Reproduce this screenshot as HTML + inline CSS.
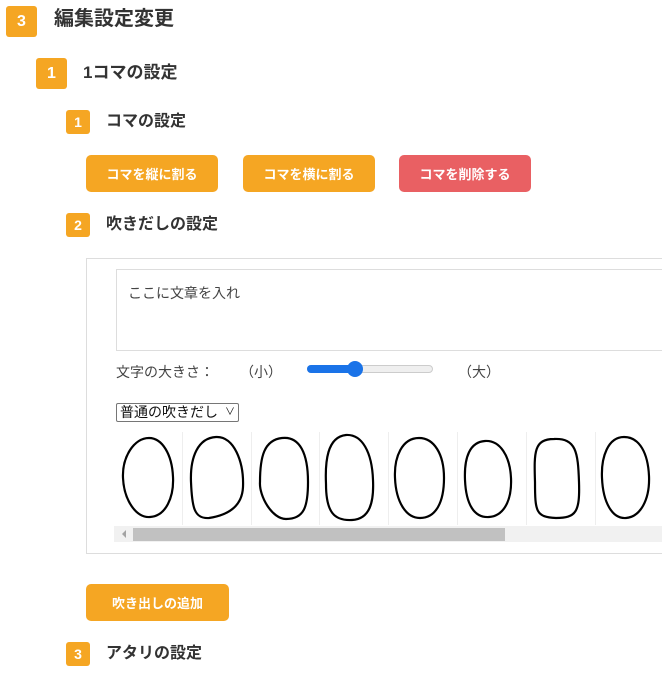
<!DOCTYPE html>
<html><head><meta charset="utf-8"><style>
*{margin:0;padding:0;box-sizing:border-box}
body{width:662px;height:682px;overflow:hidden;background:#fff;font-family:"Liberation Sans","Noto Sans CJK JP",sans-serif;color:#333;position:relative}
.a{position:absolute}
.b{position:absolute;background:#f5a623;color:#fff;border-radius:3px;display:flex;align-items:center;justify-content:center;font-weight:bold}
.t{position:absolute;font-weight:bold;color:#333;white-space:nowrap}
.btn{position:absolute;height:37px;border-radius:5px;background:#f5a623;color:#fff;font-weight:bold;font-size:13px;display:flex;align-items:center;justify-content:center}
</style></head><body>
<div class="b" style="left:6px;top:6px;width:31px;height:31px;font-size:16px">3</div>
<div class="t" style="left:54px;top:6px;font-size:20px;line-height:26px">編集設定変更</div>
<div class="b" style="left:36px;top:58px;width:31px;height:31px;font-size:16px">1</div>
<div class="t" style="left:83px;top:61px;font-size:17px;line-height:24px">1コマの設定</div>
<div class="b" style="left:66px;top:110px;width:24px;height:24px;font-size:14px">1</div>
<div class="t" style="left:106px;top:112px;font-size:16px;line-height:20px">コマの設定</div>
<div class="btn" style="left:86px;top:155px;width:132px">コマを縦に割る</div>
<div class="btn" style="left:243px;top:155px;width:132px">コマを横に割る</div>
<div class="btn" style="left:399px;top:155px;width:132px;background:#e96063">コマを削除する</div>
<div class="b" style="left:66px;top:213px;width:24px;height:24px;font-size:14px">2</div>
<div class="t" style="left:106px;top:215px;font-size:16px;line-height:20px">吹きだしの設定</div>
<div class="a" style="left:86px;top:258px;width:600px;height:296px;border:1px solid #ddd"></div>
<div class="a" style="left:116px;top:269px;width:560px;height:82px;border:1px solid #ddd;padding:13px 11px;font-size:14px;color:#444">ここに文章を入れ</div>
<div class="a" style="left:116px;top:362px;font-size:14px;color:#444">文字の大きさ：</div>
<div class="a" style="left:240px;top:362px;font-size:14px;color:#444">（小）</div>
<div class="a" style="left:458px;top:362px;font-size:14px;color:#444">（大）</div>
<div class="a" style="left:307px;top:365px;width:126px;height:8px;border-radius:4px;background:#efefef;border:1px solid #ccc"></div>
<div class="a" style="left:307px;top:365px;width:50px;height:8px;border-radius:4px;background:#1a73e8"></div>
<div class="a" style="left:347px;top:361px;width:16px;height:16px;border-radius:50%;background:#1a73e8"></div>
<div class="a" style="left:116px;top:403px;width:123px;height:19px;border:1px solid #767676;border-radius:2px;font-size:14px;line-height:17px;padding-left:3px;color:#111;white-space:nowrap">普通の吹きだし<span style="position:absolute;right:3px;top:0;font-size:10px">&#x2228;</span></div>
<div class="a" style="left:114px;top:432px;width:560px;height:110px;overflow:hidden">
<svg width="560" height="94" style="position:absolute;left:0;top:0" fill="none" stroke="#000" stroke-width="2.2">
<path d="M35 6 C20 6 8 25 9 46 C10 68 22 86 36 85 C52 84 60 65 59 45 C58 22 48 6 35 6Z"/>
<path d="M102 5 C84 6 76 25 77 50 C78 75 80 87 95 86 C108 84 128 78 129 55 C130 30 120 4 102 5Z"/>
<path d="M168 6 C150 8 146 25 146 50 C145 64 158 87 172 87 C190 87 194 75 194 50 C194 22 186 4 168 6Z"/>
<path d="M232 3 C213 5 211 30 212 52 C212 80 220 89 238 88 C256 87 260 70 259 48 C258 20 248 2 232 3Z"/>
<path d="M305 6 C288 6 280 25 281 46 C282 70 292 86 306 86 C322 86 330 70 330 46 C330 22 320 6 305 6Z"/>
<path d="M371 9 C356 10 350 25 351 48 C352 72 360 86 375 85 C390 84 398 68 397 46 C396 24 386 8 371 9Z"/>
<path d="M440 7 C420 7 420 20 421 50 C421 80 422 85 442 86 C462 86 466 80 465 50 C464 20 462 6 440 7Z"/>
<path d="M510 5 C494 5 487 25 488 46 C489 70 498 87 512 86 C526 85 536 68 535 44 C534 22 526 5 510 5Z"/>
</svg>
<div style="position:absolute;left:0;top:94px;width:560px;height:16px;background:#f1f1f1"></div>
<div style="position:absolute;left:19px;top:96px;width:372px;height:13px;background:#c1c1c1"></div>
<div style="position:absolute;left:8px;top:98px;width:0;height:0;border-top:4px solid transparent;border-bottom:4px solid transparent;border-right:4px solid #a3a3a3"></div>
</div>
<div class="a" style="left:182px;top:432px;width:1px;height:93px;background:#eee"></div>
<div class="a" style="left:251px;top:432px;width:1px;height:93px;background:#eee"></div>
<div class="a" style="left:319px;top:432px;width:1px;height:93px;background:#eee"></div>
<div class="a" style="left:388px;top:432px;width:1px;height:93px;background:#eee"></div>
<div class="a" style="left:457px;top:432px;width:1px;height:93px;background:#eee"></div>
<div class="a" style="left:526px;top:432px;width:1px;height:93px;background:#eee"></div>
<div class="a" style="left:595px;top:432px;width:1px;height:93px;background:#eee"></div>
<div class="btn" style="left:86px;top:584px;width:143px">吹き出しの追加</div>
<div class="b" style="left:66px;top:642px;width:24px;height:24px;font-size:14px">3</div>
<div class="t" style="left:106px;top:644px;font-size:16px;line-height:20px">アタリの設定</div>
</body></html>
